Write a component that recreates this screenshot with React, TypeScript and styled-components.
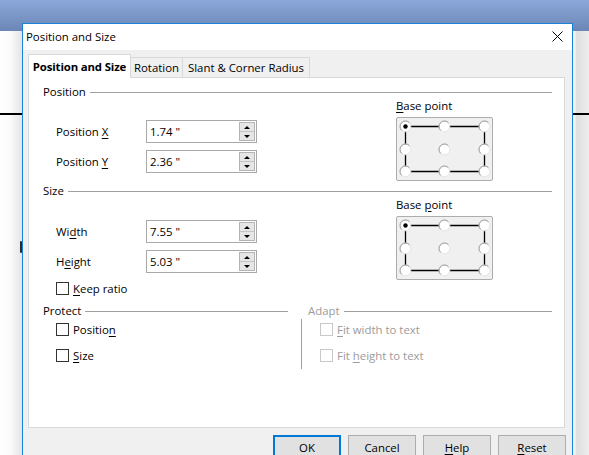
import React from "react";
import styled, { createGlobalStyle } from "styled-components";

const GlobalStyle = createGlobalStyle`
  html, body { margin: 0; padding: 0; background: #fff; }
  body {
    font-family: "Open Sans", "Liberation Sans", sans-serif;
    font-size: 11.4px;
    color: #000;
  }
`;

const Desktop = styled.div`
  position: relative;
  width: 589px;
  height: 455px;
  overflow: hidden;
  background:
    linear-gradient(to bottom, #8ba8da 0px, #6b86b6 31px, transparent 31px) no-repeat,
    linear-gradient(#000, #000) no-repeat 0 113px / 100% 2px,
    linear-gradient(to right, #ffffff 0px, #fbfbfb 10px, #e4e4e4 22px, #e4e4e4 573px, #f8f8f8 574px, #dedede 577px, #eeeeee 589px);
`;

const StrayMark = styled.span`
  position: absolute;
  left: 20px;
  top: 241px;
  width: 2px;
  height: 12px;
  background: #2a2a2a;
  border-radius: 1px;
`;

const Dialog = styled.div`
  position: absolute;
  left: 22px;
  top: 23px;
  width: 551px;
  height: 440px;
  box-sizing: border-box;
  border: 1px solid #1883d7;
  background: #f0f0f0;
  display: flex;
  flex-direction: column;
`;

const TitleBar = styled.div`
  height: 26px;
  flex: none;
  background: #fff;
  display: flex;
  align-items: center;
  justify-content: space-between;
  padding: 0 9px 2px 3px;
  box-sizing: border-box;
`;

const Title = styled.span`
  white-space: nowrap;
`;

const Body = styled.div`
  flex: 1;
  display: flex;
  flex-direction: column;
  padding: 4px 7px 0 5px;
`;

const TabStrip = styled.div`
  display: flex;
  align-items: flex-end;
  height: 24px;
  margin-bottom: -1px;
  position: relative;
  z-index: 1;
`;

const Tab = styled.div<{ $active?: boolean; $w: number }>`
  box-sizing: border-box;
  width: ${(p) => p.$w}px;
  height: ${(p) => (p.$active ? 24 : 21)}px;
  margin-left: -1px;
  &:first-child { margin-left: 0; }
  border: 1px solid #d9d9d9;
  border-bottom: ${(p) => (p.$active ? "none" : "1px solid #d9d9d9")};
  background: ${(p) => (p.$active ? "#fff" : "#f0f0f0")};
  font-weight: ${(p) => (p.$active ? 700 : 400)};
  letter-spacing: ${(p) => (p.$active ? "-0.15px" : "0")};
  position: relative;
  z-index: ${(p) => (p.$active ? 2 : 1)};
  display: flex;
  align-items: center;
  justify-content: center;
  padding-bottom: ${(p) => (p.$active ? 1 : 0)}px;
  white-space: nowrap;
`;

const Panel = styled.div`
  box-sizing: border-box;
  height: 351px;
  background: #fff;
  border: 1px solid #d9d9d9;
  padding: 7px 12px 0 14px;
  display: flex;
  flex-direction: column;
`;

const SectionHeader = styled.div<{ $mt?: number; $indent?: number; $disabled?: boolean }>`
  display: flex;
  align-items: center;
  gap: 4px;
  height: 14px;
  line-height: 14px;
  margin-top: ${(p) => p.$mt ?? 0}px;
  padding-left: ${(p) => p.$indent ?? 0}px;
  color: ${(p) => (p.$disabled ? "#9b9b9b" : "#000")};
  white-space: nowrap;
`;

const Rule = styled.div`
  flex: 1;
  height: 1px;
  background: #a0a0a0;
`;

const SectionBody = styled.div`
  display: grid;
  grid-template-columns: 353px 1fr;
`;

const Fields = styled.div<{ $pt: number }>`
  display: flex;
  flex-direction: column;
  gap: 7px;
  padding-top: ${(p) => p.$pt}px;
  padding-left: 13px;
`;

const FieldRow = styled.div`
  display: flex;
  align-items: center;
  height: 23px;
`;

const FieldLabel = styled.span`
  width: 90px;
  white-space: nowrap;
`;

const SpinField = styled.div`
  box-sizing: border-box;
  width: 111px;
  height: 23px;
  border: 1px solid #a9a9a9;
  background: #fff;
  display: flex;
  align-items: center;
  padding: 0 1px 0 3px;
`;

const FieldValue = styled.span`
  flex: 1;
  white-space: nowrap;
`;

const Spin = styled.div`
  box-sizing: border-box;
  width: 16px;
  height: 19px;
  border: 1px solid #b4b4b4;
  background: #e6e6e6;
  display: flex;
  flex-direction: column;
`;

const SpinHalf = styled.div<{ $top?: boolean }>`
  flex: 1;
  display: flex;
  align-items: center;
  justify-content: center;
  border-bottom: ${(p) => (p.$top ? "1px solid #c4c4c4" : "none")};
`;

const Arrow = styled.span<{ $up?: boolean }>`
  width: 0;
  height: 0;
  border-left: 3px solid transparent;
  border-right: 3px solid transparent;
  ${(p) => (p.$up ? "border-bottom: 3px solid #000;" : "border-top: 3px solid #000;")}
`;

const CheckRow = styled.div<{ $mt?: number }>`
  display: flex;
  align-items: center;
  gap: 4px;
  height: 13px;
  margin-top: ${(p) => p.$mt ?? 0}px;
  white-space: nowrap;
`;

const Box = styled.span<{ $disabled?: boolean }>`
  box-sizing: border-box;
  width: 13px;
  height: 13px;
  flex: none;
  border: 1px solid ${(p) => (p.$disabled ? "#c8c8c8" : "#333")};
  background: #fff;
`;

const Text = styled.span<{ $disabled?: boolean }>`
  color: ${(p) => (p.$disabled ? "#9b9b9b" : "#000")};
  line-height: 13px;
`;

const U = styled.u`
  text-decoration: underline;
  text-underline-offset: 2px;
`;

const BaseBlock = styled.div`
  display: flex;
  flex-direction: column;
`;

const BaseLabel = styled.span`
  height: 14px;
  line-height: 14px;
  white-space: nowrap;
`;

const BaseBox = styled.div`
  box-sizing: border-box;
  width: 97px;
  height: 64px;
  margin-top: 4px;
  border: 1px solid #adadad;
  border-radius: 2px;
  background: #f0f0f0;
  svg { display: block; }
`;

const BottomRow = styled.div`
  display: grid;
  grid-template-columns: 245px 251px;
  column-gap: 13px;
  margin-top: 9px;
`;

const Col = styled.div`
  display: flex;
  flex-direction: column;
`;

const ProtectBody = styled.div`
  display: flex;
  flex-direction: column;
  gap: 13px;
  margin-top: 5px;
  padding-left: 13px;
`;

const AdaptBody = styled.div`
  box-sizing: border-box;
  height: 50px;
  margin-top: 1px;
  border-left: 1px solid #a0a0a0;
  padding: 4px 0 0 18px;
  display: flex;
  flex-direction: column;
  gap: 13px;
`;

const ButtonRow = styled.div`
  display: flex;
  justify-content: flex-end;
  gap: 7px;
  margin-top: 7px;
  margin-right: -1px;
`;

const Button = styled.div<{ $default?: boolean }>`
  box-sizing: border-box;
  width: 68px;
  height: 24px;
  flex: none;
  border: ${(p) => (p.$default ? "2px solid #0078d7" : "1px solid #adadad")};
  background: #e1e1e1;
  display: flex;
  align-items: center;
  justify-content: center;
  white-space: nowrap;
`;

const xs = [8, 47, 87];
const ys = [8, 31, 53];

function Radio({ cx, cy, on }: { cx: number; cy: number; on: boolean }) {
  const d = 3.9;
  return (
    <g>
      <circle cx={cx} cy={cy} r={5.3} fill="#fff" stroke="#e4e4e4" strokeWidth={1} />
      <path
        d={`M${cx - d} ${cy + d} A5.3 5.3 0 0 1 ${cx + d} ${cy - d}`}
        fill="none"
        stroke="#9a9a9a"
        strokeWidth={1}
      />
      {on && <circle cx={cx} cy={cy} r={2.2} fill="#000" />}
    </g>
  );
}

function BasePoint() {
  return (
    <BaseBox>
      <svg width="95" height="62" viewBox="0 0 95 62">
        <g stroke="#000" strokeWidth={1.3} fill="none">
          <line x1={8} y1={8.5} x2={87} y2={8.5} />
          <line x1={8} y1={53.5} x2={87} y2={53.5} />
          <line x1={8.5} y1={8} x2={8.5} y2={53} />
          <line x1={87.5} y1={8} x2={87.5} y2={53} />
        </g>
        {ys.map((y, r) =>
          xs.map((x, c) => <Radio key={`${r}-${c}`} cx={x + 0.5} cy={y + 0.5} on={r === 0 && c === 0} />)
        )}
      </svg>
    </BaseBox>
  );
}

function SpinBox({ value }: { value: string }) {
  return (
    <SpinField>
      <FieldValue>{value}</FieldValue>
      <Spin>
        <SpinHalf $top>
          <Arrow $up />
        </SpinHalf>
        <SpinHalf>
          <Arrow />
        </SpinHalf>
      </Spin>
    </SpinField>
  );
}

function Field({ label, value }: { label: React.ReactNode; value: string }) {
  return (
    <FieldRow>
      <FieldLabel>{label}</FieldLabel>
      <SpinBox value={value} />
    </FieldRow>
  );
}

function Check({ label, disabled, mt }: { label: React.ReactNode; disabled?: boolean; mt?: number }) {
  return (
    <CheckRow $mt={mt}>
      <Box $disabled={disabled} />
      <Text $disabled={disabled}>{label}</Text>
    </CheckRow>
  );
}

export default function App() {
  return (
    <>
      <GlobalStyle />
      <Desktop>
        <StrayMark />
        <Dialog>
          <TitleBar>
            <Title>Position and Size</Title>
            <svg width="11" height="11" viewBox="0 0 11 11">
              <path d="M0.5 0.5 L10.5 10.5 M10.5 0.5 L0.5 10.5" stroke="#000" strokeWidth={1} />
            </svg>
          </TitleBar>
          <Body>
            <TabStrip>
              <Tab $active $w={103}>Position and Size</Tab>
              <Tab $w={53}>Rotation</Tab>
              <Tab $w={128}>Slant &amp; Corner Radius</Tab>
            </TabStrip>
            <Panel>
              <SectionHeader>
                Position
                <Rule />
              </SectionHeader>
              <SectionBody>
                <Fields $pt={21}>
                  <Field label={<>Position <U>X</U></>} value={'1.74 "'} />
                  <Field label={<>Position <U>Y</U></>} value={'2.36 "'} />
                </Fields>
                <BaseBlock>
                  <BaseLabel><U>B</U>ase point</BaseLabel>
                  <BasePoint />
                </BaseBlock>
              </SectionBody>

              <SectionHeader $mt={3}>
                Size
                <Rule />
              </SectionHeader>
              <SectionBody>
                <Fields $pt={22}>
                  <Field label={<>Wi<U>d</U>th</>} value={'7.55 "'} />
                  <Field label={<>H<U>e</U>ight</>} value={'5.03 "'} />
                  <Check mt={2} label={<><U>K</U>eep ratio</>} />
                </Fields>
                <BaseBlock>
                  <BaseLabel>Base <U>p</U>oint</BaseLabel>
                  <BasePoint />
                </BaseBlock>
              </SectionBody>

              <BottomRow>
                <Col>
                  <SectionHeader>
                    Protect
                    <Rule />
                  </SectionHeader>
                  <ProtectBody>
                    <Check label={<>Positio<U>n</U></>} />
                    <Check label={<><U>S</U>ize</>} />
                  </ProtectBody>
                </Col>
                <Col>
                  <SectionHeader $indent={7} $disabled>
                    Adapt
                    <Rule />
                  </SectionHeader>
                  <AdaptBody>
                    <Check disabled label={<><U>F</U>it width to text</>} />
                    <Check disabled label={<>Fit <U>h</U>eight to text</>} />
                  </AdaptBody>
                </Col>
              </BottomRow>
            </Panel>
            <ButtonRow>
              <Button $default>OK</Button>
              <Button>Cancel</Button>
              <Button><span><U>H</U>elp</span></Button>
              <Button><span><U>R</U>eset</span></Button>
            </ButtonRow>
          </Body>
        </Dialog>
      </Desktop>
    </>
  );
}
